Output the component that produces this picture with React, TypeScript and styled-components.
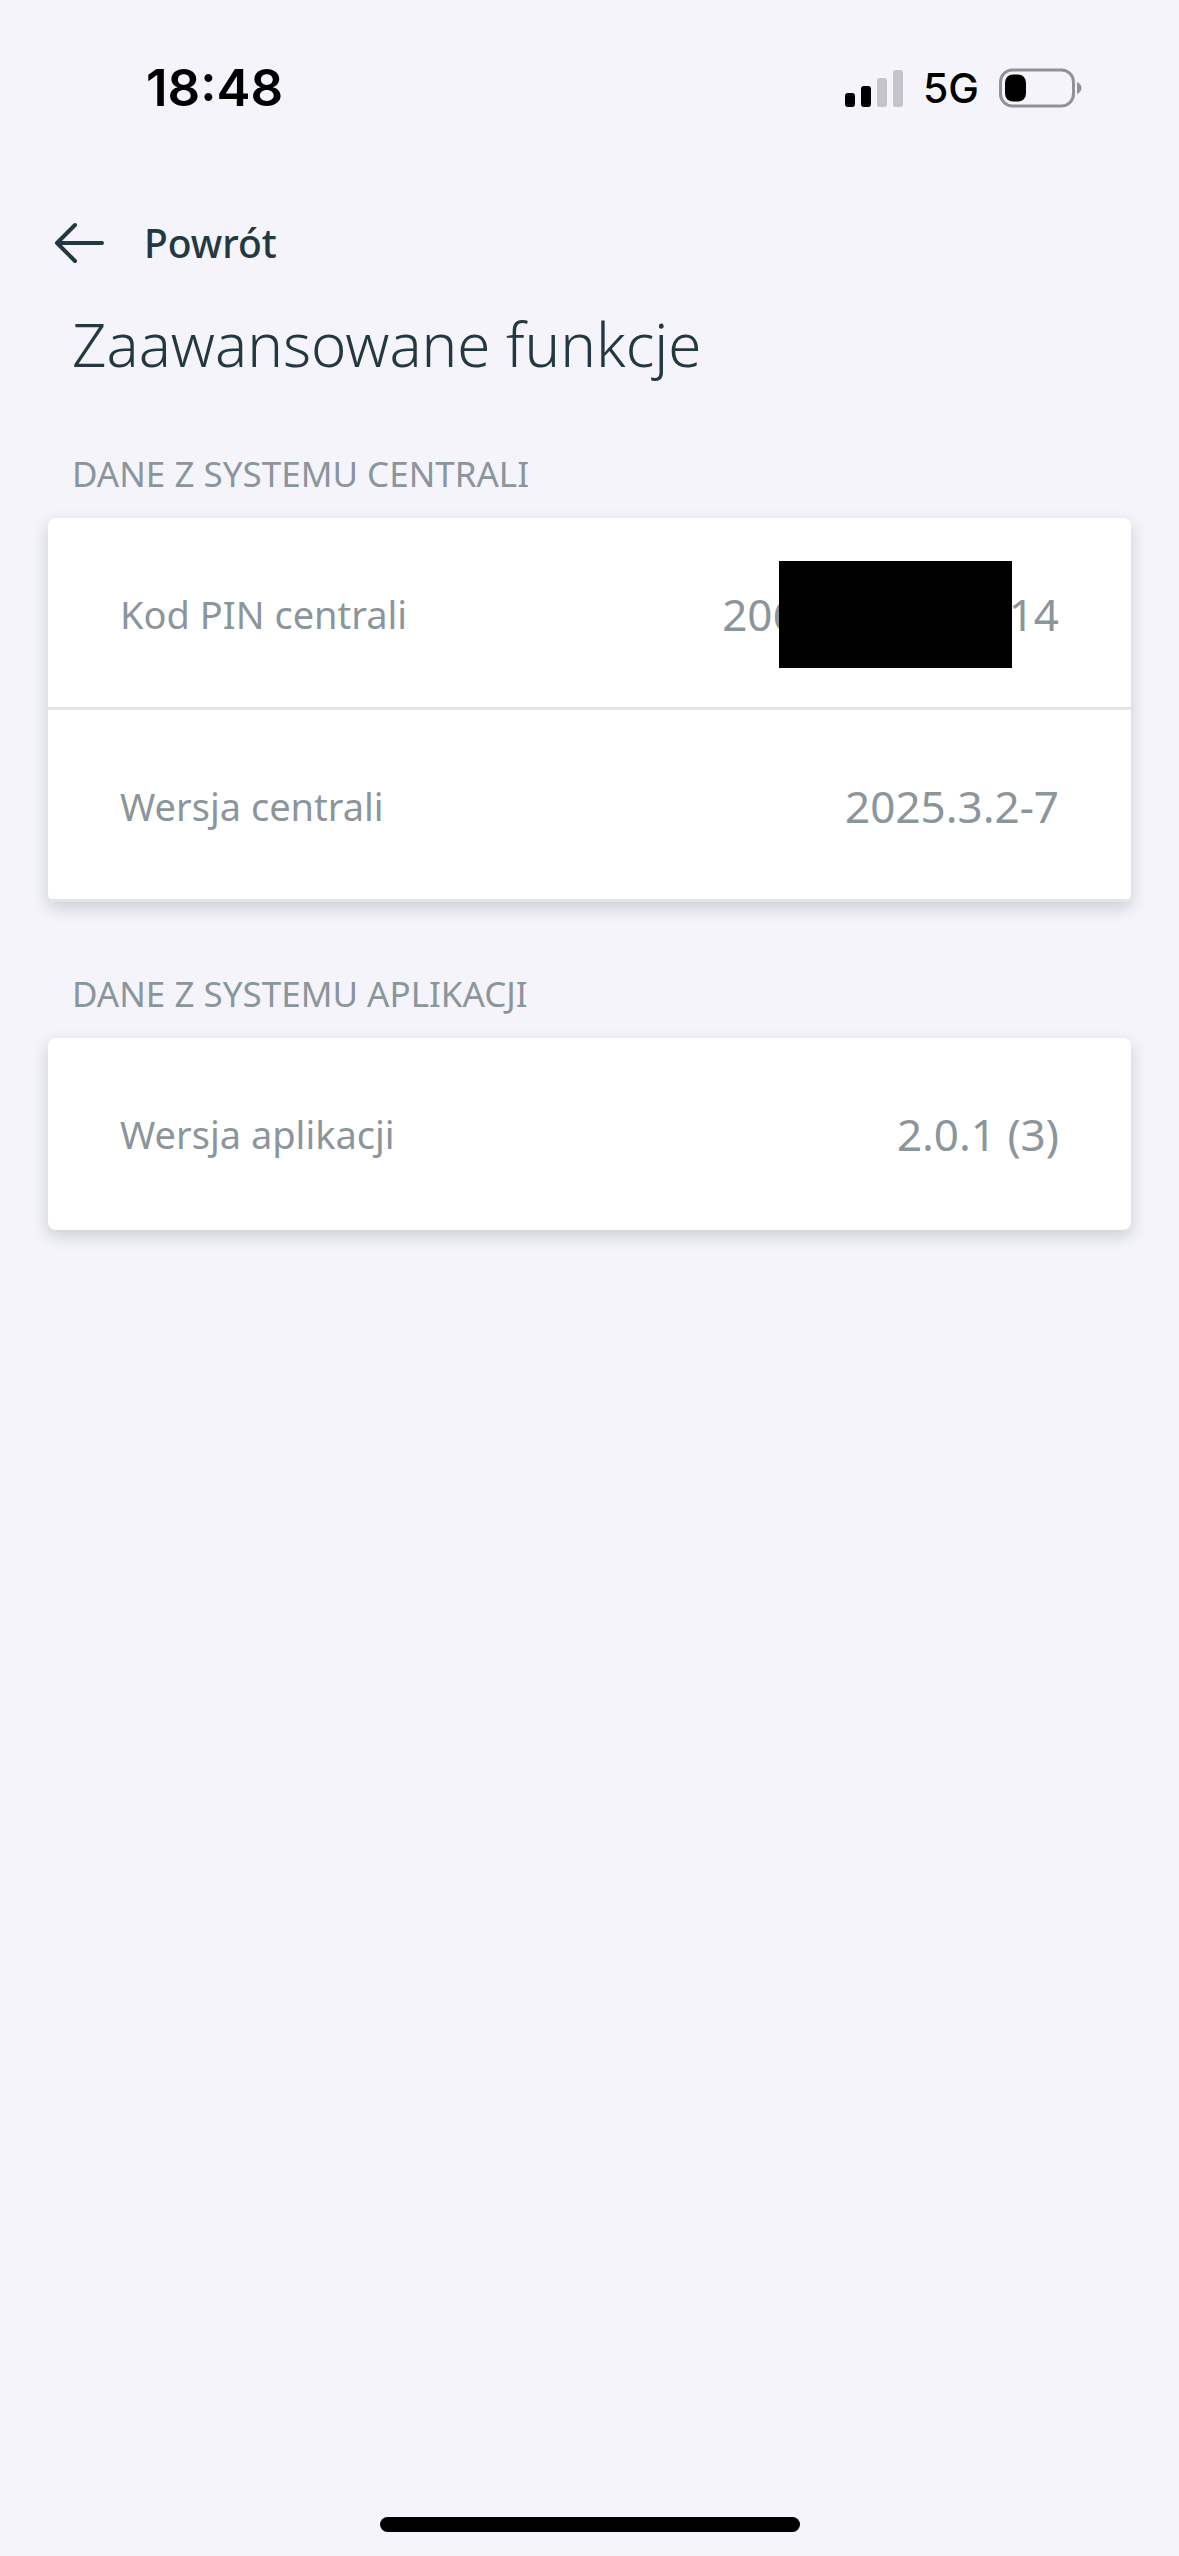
import React from "react";
import styled, { createGlobalStyle } from "styled-components";

const colors = {
  page: "#f4f4fa",
  ink: "#233840",
  muted: "#8b959c",
  line: "#e2e4e5",
};

const GlobalStyle = createGlobalStyle`
  *, *::before, *::after { box-sizing: border-box; }
  body {
    margin: 0;
    background: ${colors.page};
    font-family: "Noto Sans", "Open Sans", sans-serif;
  }
`;

const Screen = styled.div`
  display: flex;
  flex-direction: column;
  min-height: 100vh;
  background: ${colors.page};
`;

const StatusBar = styled.header`
  display: flex;
  align-items: center;
  justify-content: space-between;
  height: 176px;
  padding: 0 96px 0 146px;
  color: #000;
  font-family: Inter, sans-serif;
`;

const Clock = styled.time`
  font-size: 51px;
  font-weight: 600;
  line-height: 60px;
`;

const StatusIcons = styled.div`
  display: flex;
  align-items: center;
  gap: 20px;
`;

const Network = styled.span`
  font-size: 41px;
  font-weight: 500;
  line-height: 52px;
`;

const NavBar = styled.nav`
  display: flex;
  padding: 32px 48px 0;
`;

const BackButton = styled.button`
  display: flex;
  align-items: center;
  gap: 38px;
  height: 70px;
  padding: 0 6px;
  border: 0;
  background: none;
  color: ${colors.ink};
  font: 500 39px/56px "Noto Sans", sans-serif;
`;

const Content = styled.main`
  flex: 1;
  padding: 28px 48px 0;
`;

const Title = styled.h1`
  margin: 0;
  padding: 0 24px;
  color: ${colors.ink};
  font-size: 60px;
  font-weight: 300;
  line-height: 76px;
`;

const Section = styled.section`
  padding-top: 64px;
`;

const SectionTitle = styled.h2`
  margin: 0 0 16px;
  padding: 0 24px;
  color: ${colors.muted};
  font-size: 35px;
  font-weight: 400;
  line-height: 56px;
  text-transform: uppercase;
`;

const Card = styled.dl`
  margin: 0;
  border-radius: 8px;
  background: #fff;
  box-shadow: 0 6px 16px rgba(35, 56, 64, 0.2);
  overflow: hidden;
`;

const Row = styled.div<{ $ruled?: boolean }>`
  display: flex;
  align-items: center;
  justify-content: space-between;
  height: 192px;
  padding: 3px 72px 0;
  border-bottom: 3px solid ${(p) => (p.$ruled ? colors.line : "transparent")};
  color: ${colors.muted};
`;

const Label = styled.dt`
  font-size: 38px;
  line-height: 56px;
`;

const Value = styled.dd`
  display: flex;
  align-items: center;
  margin: 0;
  font-size: 44px;
  line-height: 56px;
`;

const Redaction = styled.span`
  width: 233px;
  height: 107px;
  margin: 0 -3px 0 -19px;
  background: #000;
  z-index: 1;
`;

const HomeArea = styled.footer`
  display: flex;
  justify-content: center;
  padding: 24px;
`;

const HomeIndicator = styled.div`
  width: 420px;
  height: 15px;
  border-radius: 8px;
  background: #000;
`;

const SignalIcon = () => (
  <svg width="58" height="38" viewBox="0 0 58 38" aria-hidden="true">
    <rect x="0" y="24" width="10" height="14" rx="3" fill="#000" />
    <rect x="16" y="17" width="10" height="21" rx="3" fill="#000" />
    <rect x="32" y="9" width="10" height="29" rx="3" fill="#c4c4c9" />
    <rect x="48" y="1" width="10" height="37" rx="3" fill="#c4c4c9" />
  </svg>
);

const BatteryIcon = () => (
  <svg width="84" height="40" viewBox="0 0 84 40" aria-hidden="true">
    <rect x="1.5" y="2" width="73" height="36" rx="12" fill="none" stroke="#929296" strokeWidth="3" />
    <rect x="6" y="6.500" width="21" height="27" rx="8" fill="#000" />
    <path d="M78 14v12c2.600-1 4.500-3.400 4.500-6s-1.900-5-4.500-6z" fill="#929296" />
  </svg>
);

const ArrowIcon = () => (
  <svg
    width="52"
    height="44"
    viewBox="0 0 52 44"
    fill="none"
    stroke="currentColor"
    strokeWidth="4"
    strokeLinecap="round"
    strokeLinejoin="round"
    aria-hidden="true"
  >
    <path d="M48 22H3M21 4 3 22l18 18" />
  </svg>
);

export default function App() {
  return (
    <Screen>
      <GlobalStyle />
      <StatusBar>
        <Clock>18:48</Clock>
        <StatusIcons>
          <SignalIcon />
          <Network>5G</Network>
          <BatteryIcon />
        </StatusIcons>
      </StatusBar>
      <NavBar>
        <BackButton type="button">
          <ArrowIcon />
          Powrót
        </BackButton>
      </NavBar>
      <Content>
        <Title>Zaawansowane funkcje</Title>
        <Section>
          <SectionTitle>Dane z systemu centrali</SectionTitle>
          <Card>
            <Row $ruled>
              <Label>Kod PIN centrali</Label>
              <Value>
                206
                <Redaction />
                14
              </Value>
            </Row>
            <Row $ruled>
              <Label>Wersja centrali</Label>
              <Value>2025.3.2-7</Value>
            </Row>
          </Card>
        </Section>
        <Section>
          <SectionTitle>Dane z systemu aplikacji</SectionTitle>
          <Card>
            <Row>
              <Label>Wersja aplikacji</Label>
              <Value>2.0.1 (3)</Value>
            </Row>
          </Card>
        </Section>
      </Content>
      <HomeArea>
        <HomeIndicator />
      </HomeArea>
    </Screen>
  );
}
